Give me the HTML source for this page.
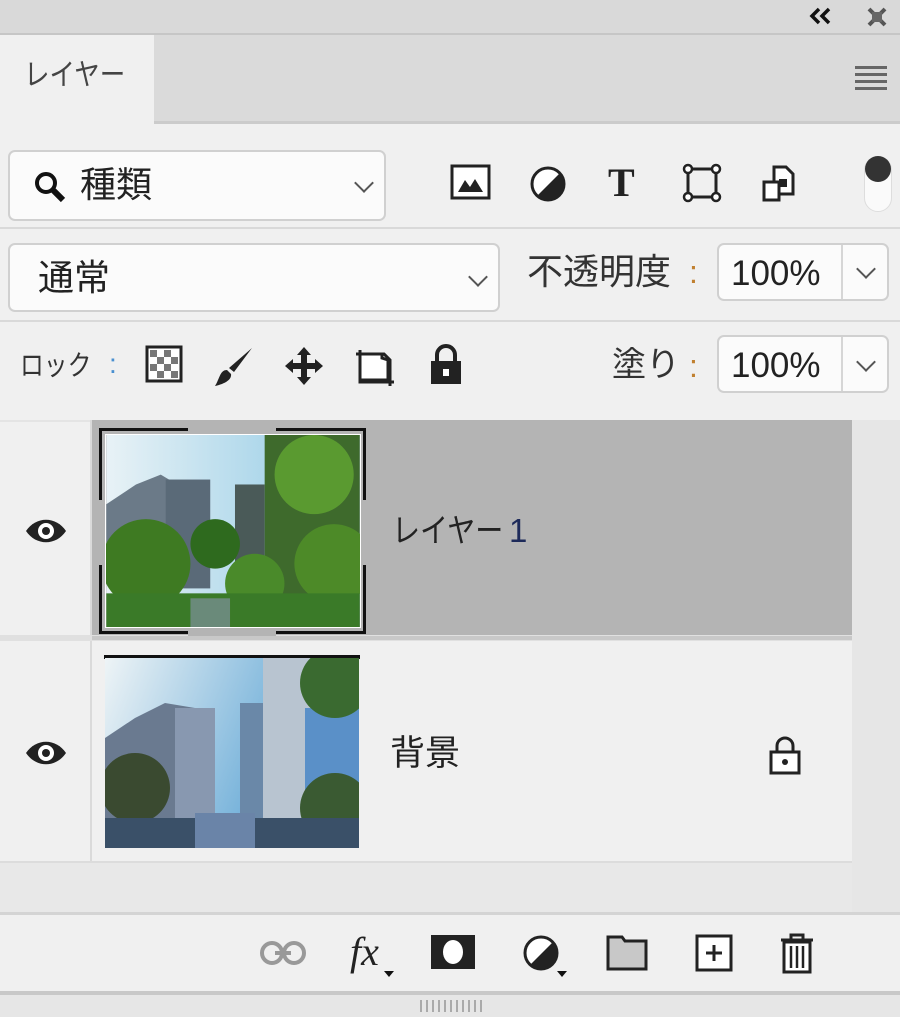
<!DOCTYPE html>
<html><head><meta charset="utf-8"><style>
*{margin:0;padding:0;box-sizing:border-box}
body{width:900px;height:1017px;background:#f0f0f0;position:relative;overflow:hidden;font-family:"Liberation Sans","Noto Sans CJK JP",sans-serif;color:#222}
.a{position:absolute}
.t{font-size:32px;line-height:1;white-space:nowrap}
.box{background:#fbfbfb;border:2px solid #d0d0d0;border-radius:7px}
.chev{width:14px;height:14px;border-right:2px solid #555;border-bottom:2px solid #555;transform:rotate(45deg)}
</style></head><body>
<!-- top bar -->
<div class="a" style="left:0;top:0;width:900px;height:33px;background:#d9d9d9"></div>
<div class="a" style="left:0;top:33px;width:900px;height:2px;background:#c6c6c6"></div>
<svg class="a" style="left:808px;top:6px" width="26" height="20" viewBox="0 0 26 20"><path d="M11 3L4 10L11 17M21 3L14 10L21 17" fill="none" stroke="#111" stroke-width="3.5"/></svg>
<svg class="a" style="left:866px;top:6px" width="22" height="22" viewBox="0 0 22 22"><g stroke="#555" stroke-width="4"><path d="M3 3L19 19M19 3L3 19"/></g><rect x="6" y="6" width="10" height="10" fill="#666"/></svg>
<!-- tab row -->
<div class="a" style="left:0;top:35px;width:900px;height:88px;background:#dadada"></div>
<div class="a" style="left:0;top:35px;width:154px;height:90px;background:#f0f0f0"></div>
<div class="a" style="left:154px;top:121px;width:746px;height:3px;background:#cbcbcb"></div>
<div class="a t" style="left:24px;top:61px;color:#444;font-size:30px;transform:scaleX(0.85);transform-origin:left">レイヤー</div>
<div class="a" style="left:855px;top:66px;width:32px;height:24px;background:repeating-linear-gradient(#666 0 3px,transparent 3px 7px)"></div>
<!-- filter row -->
<div class="a box" style="left:8px;top:150px;width:378px;height:71px"></div>
<svg class="a" style="left:33px;top:170px" width="34" height="34" viewBox="0 0 34 34"><circle cx="13" cy="13" r="9" fill="none" stroke="#111" stroke-width="4"/><path d="M20 20L30 30" stroke="#111" stroke-width="6"/></svg>
<div class="a t" style="left:80px;top:167px;font-size:36px">種類</div>
<div class="a chev" style="left:357px;top:176px"></div>
<svg class="a" style="left:450px;top:164px" width="42" height="38" viewBox="0 0 42 38"><rect x="2" y="2" width="37" height="32" fill="#fff" stroke="#222" stroke-width="3"/><path d="M8 28L15 16L20 23L25 15L33 28Z" fill="#222"/></svg>
<svg class="a" style="left:529px;top:165px" width="38" height="38" viewBox="0 0 38 38"><circle cx="19" cy="19" r="16" fill="#fff" stroke="#222" stroke-width="3"/><path d="M31 8A16 16 0 0 1 8 31Z" fill="#222"/></svg>
<div class="a t" style="left:608px;top:163px;font-family:'Liberation Serif',serif;font-weight:bold;font-size:40px">T</div>
<svg class="a" style="left:682px;top:163px" width="40" height="40" viewBox="0 0 40 40"><rect x="6" y="6" width="28" height="28" fill="none" stroke="#222" stroke-width="3"/><g fill="#fff" stroke="#222" stroke-width="2.5"><circle cx="6" cy="6" r="4"/><circle cx="34" cy="6" r="4"/><circle cx="6" cy="34" r="4"/><circle cx="34" cy="34" r="4"/></g></svg>
<svg class="a" style="left:760px;top:164px" width="38" height="40" viewBox="0 0 38 40"><path d="M14 3H26L33 10V30H14Z" fill="#fff" stroke="#222" stroke-width="3"/><rect x="4" y="18" width="15" height="18" fill="#fff" stroke="#222" stroke-width="3"/><rect x="19" y="15" width="8" height="8" fill="#222"/></svg>
<div class="a" style="left:864px;top:156px;width:28px;height:56px;border-radius:14px;background:#fafafa;border:1px solid #ddd"></div>
<div class="a" style="left:865px;top:156px;width:26px;height:26px;border-radius:13px;background:#333"></div>
<div class="a" style="left:0;top:227px;width:900px;height:2px;background:#d9d9d9"></div>
<!-- blend row -->
<div class="a box" style="left:8px;top:243px;width:492px;height:69px"></div>
<div class="a t" style="left:38px;top:260px;font-size:36px">通常</div>
<div class="a chev" style="left:471px;top:270px"></div>
<div class="a t" style="left:527px;top:254px;color:#333;font-size:36px">不透明度</div>
<div class="a t" style="left:689px;top:256px;color:#c08030">:</div>
<div class="a box" style="left:717px;top:243px;width:172px;height:58px"></div>
<div class="a" style="left:841px;top:245px;width:2px;height:54px;background:#d6d6d6"></div>
<div class="a t" style="left:731px;top:256px;font-size:35px">100%</div>
<div class="a chev" style="left:859px;top:262px"></div>
<div class="a" style="left:0;top:320px;width:900px;height:2px;background:#d9d9d9"></div>
<!-- lock row -->
<div class="a t" style="left:20px;top:352px;font-size:28px;color:#333;transform:scaleX(0.85);transform-origin:left">ロック</div>
<div class="a t" style="left:109px;top:350px;font-size:28px;color:#4a90d0">:</div>
<svg class="a" style="left:145px;top:345px" width="38" height="38" viewBox="0 0 38 38"><rect x="2" y="2" width="34" height="34" fill="#fff" stroke="#222" stroke-width="3"/><g fill="#777"><rect x="5" y="5" width="7" height="7"/><rect x="19" y="5" width="7" height="7"/><rect x="12" y="12" width="7" height="7"/><rect x="26" y="12" width="7" height="7"/><rect x="5" y="19" width="7" height="7"/><rect x="19" y="19" width="7" height="7"/><rect x="12" y="26" width="7" height="7"/><rect x="26" y="26" width="7" height="7"/></g></svg>
<svg class="a" style="left:212px;top:344px" width="46" height="46" viewBox="0 0 46 46"><path d="M40 4L22 28L17 24Z" fill="#222"/><path d="M15 26C8 26 8 34 3 42C12 40 20 36 19 30Z" fill="#222"/></svg>
<svg class="a" style="left:282px;top:344px" width="44" height="44" viewBox="0 0 44 44"><path d="M22 3L29 11H25V19H33V15L41 22L33 29V25H25V33H29L22 41L15 33H19V25H11V29L3 22L11 15V19H19V11H15Z" fill="#222"/></svg>
<svg class="a" style="left:352px;top:344px" width="46" height="46" viewBox="0 0 46 46"><path d="M8 10H32L38 16V38M8 6V38H42M4 10H8M38 38V42" fill="none" stroke="#222" stroke-width="3"/><path d="M8 10H30V14L36 16V36H8Z" fill="#fff" stroke="#222" stroke-width="3"/></svg>
<svg class="a" style="left:428px;top:344px" width="36" height="42" viewBox="0 0 36 42"><path d="M9 18V11A9 9 0 0 1 27 11V18" fill="none" stroke="#222" stroke-width="4"/><rect x="3" y="17" width="30" height="23" fill="#222"/><rect x="15" y="25" width="6" height="7" fill="#fff"/></svg>
<div class="a t" style="left:612px;top:348px;color:#333;font-size:34px">塗り</div>
<div class="a t" style="left:689px;top:350px;color:#c08030">:</div>
<div class="a box" style="left:717px;top:335px;width:172px;height:58px"></div>
<div class="a" style="left:841px;top:337px;width:2px;height:54px;background:#d6d6d6"></div>
<div class="a t" style="left:731px;top:348px;font-size:35px">100%</div>
<div class="a chev" style="left:859px;top:355px"></div>
<!-- layers -->
<div class="a" style="left:0;top:420px;width:900px;height:2px;background:#e4e4e4"></div>
<div class="a" style="left:852px;top:420px;width:48px;height:492px;background:#e6e6e6"></div>
<div class="a" style="left:90px;top:420px;width:2px;height:443px;background:#dadada"></div>
<div class="a" style="left:92px;top:420px;width:760px;height:215px;background:#b4b4b4"></div>
<div class="a" style="left:0;top:635px;width:852px;height:6px;background:#e0e0e0"></div>
<div class="a" style="left:92px;top:636px;width:760px;height:4px;background:#c8c8c8"></div>
<div class="a" style="left:0;top:861px;width:852px;height:2px;background:#dcdcdc"></div>
<div class="a" style="left:0;top:863px;width:852px;height:49px;background:#e8e8e8"></div>
<svg class="a" style="left:24px;top:516px" width="44" height="30" viewBox="0 0 44 30"><path d="M2 15C12 0 32 0 42 15C32 30 12 30 2 15Z" fill="#222"/><circle cx="22" cy="15" r="8" fill="#fff"/><circle cx="22" cy="15" r="4" fill="#222"/></svg>
<svg class="a" style="left:24px;top:738px" width="44" height="30" viewBox="0 0 44 30"><path d="M2 15C12 0 32 0 42 15C32 30 12 30 2 15Z" fill="#222"/><circle cx="22" cy="15" r="8" fill="#fff"/><circle cx="22" cy="15" r="4" fill="#222"/></svg>
<!-- thumb 1 -->
<div class="a" style="left:99px;top:428px;width:267px;height:206px;border:3px solid #111"></div>
<div class="a" style="left:188px;top:426px;width:88px;height:8px;background:#b4b4b4"></div>
<div class="a" style="left:188px;top:628px;width:88px;height:8px;background:#b4b4b4"></div>
<div class="a" style="left:97px;top:500px;width:8px;height:65px;background:#b4b4b4"></div>
<div class="a" style="left:360px;top:500px;width:8px;height:65px;background:#b4b4b4"></div>
<svg class="a" style="left:105px;top:434px;border:1px solid #fff" width="256" height="194" viewBox="0 0 256 194"><defs><linearGradient id="s" x1="0" y1="0" x2="1" y2="0"><stop offset="0" stop-color="#e8f2f6"/><stop offset="1" stop-color="#8cc8e4"/></linearGradient></defs><rect width="256" height="194" fill="url(#s)"/><path d="M0 70L30 50L55 40L80 55V150H0Z" fill="#6b7a88"/><rect x="60" y="45" width="45" height="110" fill="#5a6a78"/><rect x="130" y="50" width="30" height="110" fill="#4a5a58"/><rect x="160" y="0" width="96" height="194" fill="#3e6a2c"/><circle cx="210" cy="40" r="40" fill="#5a9a30"/><circle cx="230" cy="130" r="40" fill="#4d8a28"/><circle cx="40" cy="130" r="45" fill="#3e7a22"/><circle cx="110" cy="110" r="25" fill="#2e6a1e"/><circle cx="150" cy="150" r="30" fill="#4a8a2a"/><rect y="160" width="256" height="34" fill="#3a7a28"/><rect x="85" y="165" width="40" height="29" fill="#6a8a7a"/></svg>
<div class="a t" style="left:392px;top:514px;color:#222;font-size:33px"><span style="display:inline-block;transform:scaleX(0.85);transform-origin:left">レイヤー</span><span style="color:#1d2a5a;margin-left:-14px">1</span></div>
<!-- thumb 2 -->
<div class="a" style="left:104px;top:655px;width:256px;height:4px;background:#111"></div>
<svg class="a" style="left:105px;top:658px" width="254" height="190" viewBox="0 0 254 190"><defs><linearGradient id="s2" x1="0" y1="0" x2="1" y2="0.3"><stop offset="0" stop-color="#eef4f6"/><stop offset="1" stop-color="#4a9ad0"/></linearGradient></defs><rect width="254" height="190" fill="url(#s2)"/><path d="M0 80L30 60L60 45L90 50V160H0Z" fill="#6a7a90"/><rect x="70" y="50" width="40" height="110" fill="#8898b0"/><rect x="135" y="45" width="25" height="120" fill="#6a88a8"/><rect x="158" y="0" width="96" height="190" fill="#b8c4d0"/><rect x="200" y="50" width="54" height="120" fill="#5a90c8"/><circle cx="230" cy="25" r="35" fill="#3a6a30"/><circle cx="30" cy="130" r="35" fill="#3a4a30"/><circle cx="230" cy="150" r="35" fill="#3a5a32"/><rect y="160" width="254" height="30" fill="#3a5068"/><rect x="90" y="155" width="60" height="35" fill="#6a84a8"/></svg>
<div class="a t" style="left:390px;top:736px;font-size:35px">背景</div>
<svg class="a" style="left:768px;top:735px" width="34" height="40" viewBox="0 0 34 40"><path d="M9 18V11A8 8 0 0 1 25 11V18" fill="none" stroke="#222" stroke-width="3"/><rect x="3" y="17" width="28" height="21" fill="#fff" stroke="#222" stroke-width="3"/><circle cx="17" cy="27" r="3" fill="#222"/></svg>
<!-- bottom toolbar -->
<div class="a" style="left:0;top:912px;width:900px;height:3px;background:#d4d4d4"></div>
<svg class="a" style="left:259px;top:938px" width="48" height="30" viewBox="0 0 48 30"><g fill="none" stroke="#999" stroke-width="4"><rect x="3" y="5" width="20" height="20" rx="10"/><rect x="25" y="5" width="20" height="20" rx="10"/><path d="M16 15H32"/></g></svg>
<div class="a t" style="left:350px;top:932px;font-family:'Liberation Serif',serif;font-style:italic;font-size:40px">fx</div>
<div class="a" style="left:384px;top:971px;border-left:5px solid transparent;border-right:5px solid transparent;border-top:6px solid #111"></div>
<svg class="a" style="left:431px;top:935px" width="44" height="34" viewBox="0 0 44 34"><rect width="44" height="34" fill="#222"/><ellipse cx="22" cy="17" rx="10" ry="12" fill="#fff"/></svg>
<svg class="a" style="left:522px;top:934px" width="38" height="38" viewBox="0 0 38 38"><circle cx="19" cy="19" r="16" fill="#fff" stroke="#222" stroke-width="3"/><path d="M31 8A16 16 0 0 1 8 31Z" fill="#222"/></svg>
<div class="a" style="left:557px;top:971px;border-left:5px solid transparent;border-right:5px solid transparent;border-top:6px solid #111"></div>
<svg class="a" style="left:606px;top:935px" width="42" height="36" viewBox="0 0 42 36"><path d="M2 2H16L19 6H40V34H2Z" fill="#c8c8c8" stroke="#222" stroke-width="3"/></svg>
<svg class="a" style="left:695px;top:934px" width="38" height="38" viewBox="0 0 38 38"><rect x="2" y="2" width="34" height="34" fill="#fff" stroke="#222" stroke-width="3"/><path d="M19 11V27M11 19H27" stroke="#222" stroke-width="3"/></svg>
<svg class="a" style="left:778px;top:932px" width="38" height="42" viewBox="0 0 38 42"><path d="M3 8H35M13 8V3H25V8" fill="none" stroke="#222" stroke-width="3"/><rect x="6" y="10" width="26" height="30" fill="#fff" stroke="#222" stroke-width="3"/><path d="M13 14V36M19 14V36M25 14V36" stroke="#222" stroke-width="2.5"/></svg>
<div class="a" style="left:0;top:991px;width:900px;height:4px;background:#c8c8c8"></div>
<div class="a" style="left:0;top:995px;width:900px;height:22px;background:#e6e6e6"></div>
<div class="a" style="left:420px;top:1000px;width:62px;height:12px;background:repeating-linear-gradient(90deg,#aaa 0 2px,transparent 2px 6px)"></div>
</body></html>
